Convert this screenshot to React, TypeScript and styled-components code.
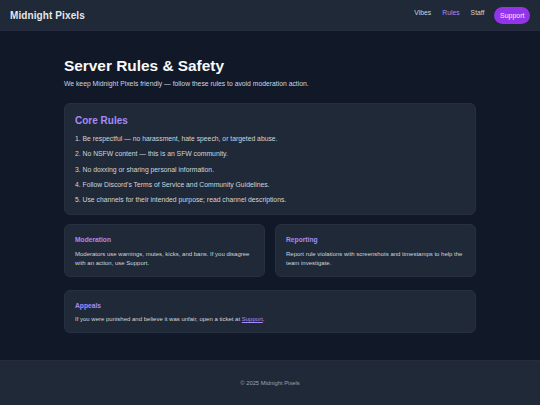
import React from 'react';
import styled, { createGlobalStyle } from 'styled-components';

const GlobalStyle = createGlobalStyle`
  html, body {
    margin: 0;
    padding: 0;
    background: #111827;
  }
  body {
    font-family: 'Liberation Sans', Arial, sans-serif;
    color: #d1d5db;
  }
  * {
    box-sizing: border-box;
  }
`;

const rules = [
  'Be respectful — no harassment, hate speech, or targeted abuse.',
  'No NSFW content — this is an SFW community.',
  'No doxxing or sharing personal information.',
  "Follow Discord's Terms of Service and Community Guidelines.",
  'Use channels for their intended purpose; read channel descriptions.',
];

const Page = styled.div`
  min-height: 405px;
  display: flex;
  flex-direction: column;
  background: #111827;
`;

const Header = styled.header`
  height: 31px;
  padding: 0 10px;
  display: flex;
  align-items: center;
  justify-content: space-between;
  background: #1f2937;
  border-bottom: 1px solid #272b3f;
`;

const Brand = styled.div`
  font-size: 10px;
  font-weight: 700;
  color: #e5e7eb;
  letter-spacing: 0.1px;
`;

const Nav = styled.nav`
  display: flex;
  align-items: flex-start;
  gap: 11px;
`;

const NavLink = styled.a<{ $active?: boolean }>`
  font-size: 6.8px;
  line-height: 10px;
  padding-top: 1px;
  color: ${(p) => (p.$active ? '#a78bfa' : '#d1d5db')};
  text-decoration: none;
`;

const SupportButton = styled.a`
  margin-left: -1px;
  height: 17px;
  line-height: 17px;
  padding: 0 5.5px;
  border-radius: 9px;
  background: #9333ea;
  color: #f3e8ff;
  font-size: 7px;
  text-decoration: none;
`;

const Main = styled.main`
  flex: 1;
  padding: 26px 0 26px;
`;

const Container = styled.div`
  width: 412px;
  margin: 0 auto;
`;

const Title = styled.h1`
  margin: 0;
  font-size: 15.4px;
  line-height: 18px;
  font-weight: 700;
  color: #f9fafb;
`;

const Subtitle = styled.p`
  margin: 4px 0 0;
  font-size: 6.8px;
  line-height: 9px;
  color: #cbd5e1;
`;

const Card = styled.section<{ $large?: boolean }>`
  background: #1f2937;
  border: 1px solid #273041;
  border-radius: 6px;
  padding: ${(p) => (p.$large ? '10px 10px' : '9px 10px 8px')};
`;

const CoreCard = styled(Card)`
  margin-top: 14.5px;
`;

const CoreTitle = styled.h2`
  margin: 0;
  font-size: 10px;
  line-height: 13px;
  font-weight: 700;
  color: #a78bfa;
`;

const RuleList = styled.ol`
  list-style: none;
  margin: 7.5px 0 0;
  padding: 0;
  display: flex;
  flex-direction: column;
  gap: 6.25px;
`;

const Rule = styled.li`
  font-size: 6.8px;
  line-height: 9px;
  color: #d1d5db;
`;

const Grid = styled.div`
  margin-top: 9px;
  display: grid;
  grid-template-columns: 1fr 1fr;
  gap: 10px;
`;

const CardTitle = styled.h3`
  margin: 0;
  font-size: 6.7px;
  line-height: 12px;
  font-weight: 700;
  color: #a78bfa;
`;

const CardText = styled.p`
  margin: 3.5px 0 0;
  font-size: 6px;
  line-height: 9px;
  color: #d1d5db;
`;

const AppealsCard = styled(Card)`
  margin-top: 13px;
`;

const InlineLink = styled.a`
  color: #a78bfa;
  text-decoration: underline;
`;

const Footer = styled.footer`
  height: 45px;
  display: flex;
  align-items: center;
  justify-content: center;
  background: #1f2937;
  border-top: 1px solid #272b3f;
  font-size: 5.8px;
  color: #9ca3af;
`;

export default function App() {
  return (
    <>
      <GlobalStyle />
      <Page>
        <Header>
          <Brand>Midnight Pixels</Brand>
          <Nav>
            <NavLink href="#">Vibes</NavLink>
            <NavLink href="#" $active>Rules</NavLink>
            <NavLink href="#">Staff</NavLink>
            <SupportButton href="#">Support</SupportButton>
          </Nav>
        </Header>
        <Main>
          <Container>
            <Title>Server Rules &amp; Safety</Title>
            <Subtitle>
              We keep Midnight Pixels friendly — follow these rules to avoid moderation action.
            </Subtitle>

            <CoreCard $large>
              <CoreTitle>Core Rules</CoreTitle>
              <RuleList>
                {rules.map((r, i) => (
                  <Rule key={i}>{`${i + 1}. ${r}`}</Rule>
                ))}
              </RuleList>
            </CoreCard>

            <Grid>
              <Card>
                <CardTitle>Moderation</CardTitle>
                <CardText>
                  Moderators use warnings, mutes, kicks, and bans. If you disagree with an action, use Support.
                </CardText>
              </Card>
              <Card>
                <CardTitle>Reporting</CardTitle>
                <CardText>
                  Report rule violations with screenshots and timestamps to help the team investigate.
                </CardText>
              </Card>
            </Grid>

            <AppealsCard>
              <CardTitle>Appeals</CardTitle>
              <CardText>
                If you were punished and believe it was unfair, open a ticket at{' '}
                <InlineLink href="#">Support</InlineLink>.
              </CardText>
            </AppealsCard>
          </Container>
        </Main>
        <Footer>© 2025 Midnight Pixels</Footer>
      </Page>
    </>
  );
}
